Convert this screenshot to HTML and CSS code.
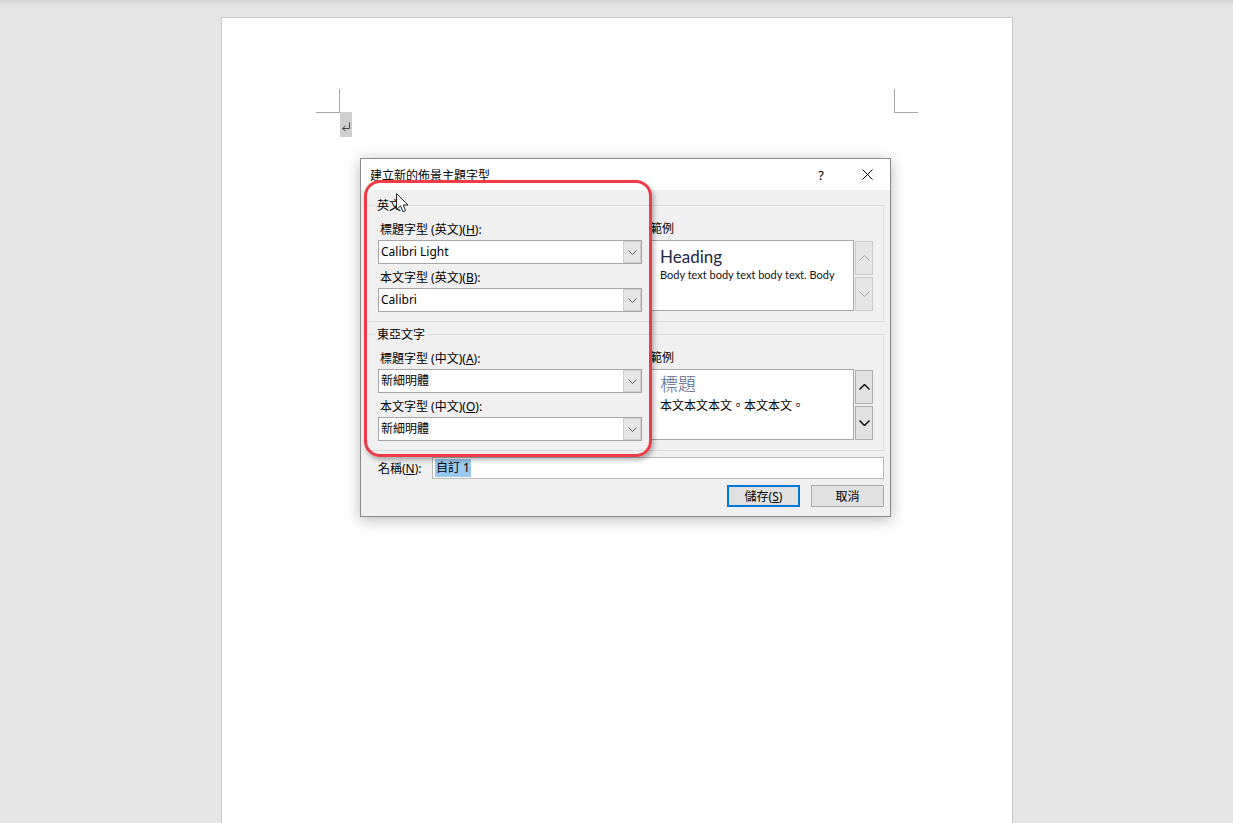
FILE: index.html
```html
<!DOCTYPE html>
<html lang="zh-Hant">
<head>
    <meta charset="UTF-8">
    <title>建立新的佈景主題字型</title>
    <link rel="stylesheet" href="styles.css">
</head>
<body>
    <div class="page">
        <div class="page-body">
            <span class="para-mark">
                <svg width="12" height="25" viewBox="0 0 12 25">
                    <path d="M9.5 10.5 V16.5 H3" fill="none" stroke="#444" stroke-width="1"/>
                    <path d="M5.5 14 L2.5 16.5 L5.5 19" fill="none" stroke="#444" stroke-width="1"/>
                </svg>
            </span>
        </div>
    </div>

    <div class="dialog">
        <div class="titlebar">
            <span class="title">建立新的佈景主題字型</span>
            <span class="cap-btn">?</span>
            <span class="cap-btn">
                <svg width="11" height="11" viewBox="0 0 11 11">
                    <path d="M0.5 0.5 L10.5 10.5 M10.5 0.5 L0.5 10.5" stroke="#000" stroke-width="1"/>
                </svg>
            </span>
        </div>

        <div class="dialog-body">
            <!-- latin fonts -->
            <div class="group">
                <span class="legend">英文</span>
                <div class="col-fonts">
                    <div class="label">標題字型 (英文)(<u>H</u>):</div>
                    <div class="combo">
                        <span class="combo-text">Calibri Light</span>
                        <span class="combo-btn"><svg width="9" height="5" viewBox="0 0 9 5"><path d="M0.5 0.5 L4.5 4.5 L8.5 0.5" fill="none" stroke="#555"/></svg></span>
                    </div>
                    <div class="label second">本文字型 (英文)(<u>B</u>):</div>
                    <div class="combo">
                        <span class="combo-text">Calibri</span>
                        <span class="combo-btn"><svg width="9" height="5" viewBox="0 0 9 5"><path d="M0.5 0.5 L4.5 4.5 L8.5 0.5" fill="none" stroke="#555"/></svg></span>
                    </div>
                </div>
                <div class="col-sample">
                    <div class="sample-label">範例</div>
                    <div class="sample-row">
                        <div class="sample">
                            <div class="sample-head latin">Heading</div>
                            <div class="sample-text latin">Body text body text body text. Body</div>
                        </div>
                        <div class="spin">
                            <span class="spin-btn disabled"><svg width="11" height="6" viewBox="0 0 11 6"><path d="M0.5 5.5 L5.5 0.5 L10.5 5.5" fill="none" stroke="#a6a6a6"/></svg></span>
                            <span class="spin-btn disabled"><svg width="11" height="6" viewBox="0 0 11 6"><path d="M0.5 0.5 L5.5 5.5 L10.5 0.5" fill="none" stroke="#a6a6a6"/></svg></span>
                        </div>
                    </div>
                </div>
            </div>

            <!-- east asian fonts -->
            <div class="group">
                <span class="legend">東亞文字</span>
                <div class="col-fonts">
                    <div class="label">標題字型 (中文)(<u>A</u>):</div>
                    <div class="combo">
                        <span class="combo-text">新細明體</span>
                        <span class="combo-btn"><svg width="9" height="5" viewBox="0 0 9 5"><path d="M0.5 0.5 L4.5 4.5 L8.5 0.5" fill="none" stroke="#555"/></svg></span>
                    </div>
                    <div class="label second">本文字型 (中文)(<u>O</u>):</div>
                    <div class="combo">
                        <span class="combo-text">新細明體</span>
                        <span class="combo-btn"><svg width="9" height="5" viewBox="0 0 9 5"><path d="M0.5 0.5 L4.5 4.5 L8.5 0.5" fill="none" stroke="#555"/></svg></span>
                    </div>
                </div>
                <div class="col-sample">
                    <div class="sample-label">範例</div>
                    <div class="sample-row">
                        <div class="sample cjk">
                            <div class="sample-head cjk">標題</div>
                            <div class="sample-text cjk">本文本文本文。本文本文。</div>
                        </div>
                        <div class="spin">
                            <span class="spin-btn"><svg width="11" height="6" viewBox="0 0 11 6"><path d="M0.5 5.5 L5.5 0.5 L10.5 5.5" fill="none" stroke="#000" stroke-width="1.4"/></svg></span>
                            <span class="spin-btn"><svg width="11" height="6" viewBox="0 0 11 6"><path d="M0.5 0.5 L5.5 5.5 L10.5 0.5" fill="none" stroke="#000" stroke-width="1.4"/></svg></span>
                        </div>
                    </div>
                </div>
            </div>

            <div class="name-row">
                <span class="name-label">名稱(<u>N</u>):</span>
                <div class="name-input"><span class="sel">自訂 1</span></div>
            </div>

            <div class="btn-row">
                <span class="btn default">儲存(<u>S</u>)</span>
                <span class="btn">取消</span>
            </div>
        </div>

        <div class="highlight"></div>
        <svg class="cursor" width="13" height="20" viewBox="0 0 13 20">
            <path d="M0.5 0.5 L0.5 16.5 L4.5 12.8 L7 18.8 L9.6 17.7 L7.2 12 L12 12 Z" fill="#fff" stroke="#222" stroke-width="1" stroke-linejoin="round"/>
        </svg>
    </div>
</body>
</html>
```

FILE: styles.css
```css
html, body {
    margin: 0;
    height: 100%;
    overflow: hidden;
}
body {
    position: relative;
    background: linear-gradient(#d2d2d2, #e6e6e6 6px) no-repeat, #e6e6e6;
    font-family: "Noto Sans", "Noto Sans CJK TC", sans-serif;
    font-size: 12px;
    color: #000;
}

/* document page */
.page {
    box-sizing: border-box;
    width: 792px;
    height: 900px;
    margin: 17px 0 0 221px;
    padding: 94px 117px 0;
    background: #fff;
    border: 1px solid #c8c8c8;
}
.page-body {
    position: relative;
    height: 600px;
}
.page-body::before,
.page-body::after {
    content: "";
    position: absolute;
    top: -23px;
    height: 23px;
    border-bottom: 1px solid #a6a6a6;
}
.page-body::before {
    left: -23px;
    width: 23px;
    border-right: 1px solid #a6a6a6;
}
.page-body::after {
    left: calc(100% - 1px);
    width: 23px;
    border-left: 1px solid #a6a6a6;
}
.para-mark {
    display: block;
    width: 12px;
    height: 25px;
    margin-left: 1px;
    background: #cecece;
}
.para-mark svg {
    display: block;
}

/* dialog window */
.dialog {
    position: absolute;
    left: 360px;
    top: 158px;
    box-sizing: border-box;
    width: 531px;
    height: 359px;
    background: #f0f0f0;
    border: 1px solid #8a8a8a;
    box-shadow: 0 3px 14px rgba(0, 0, 0, 0.28);
}
.titlebar {
    display: flex;
    align-items: center;
    height: 31px;
    background: #fff;
}
.title {
    flex: 1;
    padding-left: 9px;
}
.cap-btn {
    display: flex;
    align-items: center;
    justify-content: center;
    width: 46px;
    height: 31px;
    font-size: 13px;
}
.cap-btn svg {
    display: block;
}

.dialog-body {
    display: flex;
    flex-direction: column;
    padding: 15px 6px 0 5px;
}
.group {
    position: relative;
    display: flex;
    gap: 9px;
    padding: 14px 10px 9px 11px;
    border: 1px solid #dcdcdc;
}
.group + .group {
    margin-top: 12px;
}
.legend {
    position: absolute;
    top: -8px;
    left: 8px;
    padding: 0 2px;
    line-height: 16px;
    background: #f0f0f0;
}

.col-fonts {
    flex: none;
    width: 264px;
}
.label {
    height: 20px;
    line-height: 20px;
    padding-left: 2px;
    white-space: nowrap;
}
.label.second {
    margin-top: 4px;
}
.combo {
    box-sizing: border-box;
    display: flex;
    height: 24px;
    background: #fff;
    border: 1px solid #a6a6a6;
}
.combo-text {
    flex: 1;
    padding-left: 2px;
    line-height: 22px;
}
.combo-btn {
    display: flex;
    align-items: center;
    justify-content: center;
    width: 18px;
    background: #e6e6e6;
    box-shadow: inset 0 0 0 1px #cdcdcd;
}

.col-sample {
    flex: none;
    width: 222px;
}
.sample-label {
    height: 18px;
    line-height: 18px;
    margin: 0 0 2px -1px;
}
.sample-row {
    display: flex;
    gap: 1px;
}
.sample {
    box-sizing: border-box;
    width: 203px;
    height: 71px;
    padding: 5px 0 0 8px;
    overflow: hidden;
    background: #fff;
    border: 1px solid #a6a6a6;
}
.sample.cjk {
    padding-top: 0;
}
.sample-head {
    height: 22px;
    line-height: 22px;
    white-space: nowrap;
}
.sample-head.latin {
    font-family: "Lato", "Open Sans", sans-serif;
    font-size: 17px;
    color: #1c2843;
}
.sample-head.cjk {
    height: 26px;
    line-height: 26px;
    font-family: "Noto Sans CJK TC", sans-serif;
    font-weight: 300;
    font-size: 18px;
    color: #56688a;
}
.sample-text {
    height: 14px;
    line-height: 14px;
    white-space: nowrap;
}
.sample-text.latin {
    font-family: "Lato", "Open Sans", sans-serif;
    font-size: 11px;
    color: #111;
}
.sample-text.cjk {
    height: 17px;
    line-height: 17px;
    font-family: "Noto Sans CJK TC", sans-serif;
    font-size: 12px;
}
.spin {
    display: flex;
    flex-direction: column;
    gap: 2px;
    padding-top: 1px;
}
.spin-btn {
    box-sizing: border-box;
    display: flex;
    align-items: center;
    justify-content: center;
    width: 18px;
    height: 34px;
    background: #e1e1e1;
    border: 1px solid #adadad;
}
.spin-btn.disabled {
    background: #e6e6e6;
    border-color: #cccccc;
}

.name-row {
    display: flex;
    align-items: center;
    margin-top: 6px;
}
.name-label {
    width: 54px;
    margin-left: 12px;
}
.name-input {
    box-sizing: border-box;
    flex: 1;
    height: 22px;
    padding: 1px 2px;
    background: #fff;
    border: 1px solid #bababa;
}
.sel {
    display: inline-block;
    padding: 0 1px;
    line-height: 18px;
    background: #99c9ef;
}

.btn-row {
    display: flex;
    justify-content: flex-end;
    gap: 11px;
    margin-top: 6px;
}
.btn {
    box-sizing: border-box;
    display: flex;
    align-items: center;
    justify-content: center;
    width: 73px;
    height: 22px;
    background: #e1e1e1;
    border: 1px solid #adadad;
}
.btn.default {
    border: 2px solid #0078d7;
}

/* annotation drawn over the dialog */
.highlight {
    position: absolute;
    left: 3px;
    top: 21px;
    box-sizing: border-box;
    width: 288px;
    height: 277px;
    border: 3px solid #ee3b45;
    border-radius: 16px;
    box-shadow: 2px 3px 5px rgba(0, 0, 0, 0.3);
    pointer-events: none;
}
.cursor {
    position: absolute;
    left: 35px;
    top: 34px;
}
```
